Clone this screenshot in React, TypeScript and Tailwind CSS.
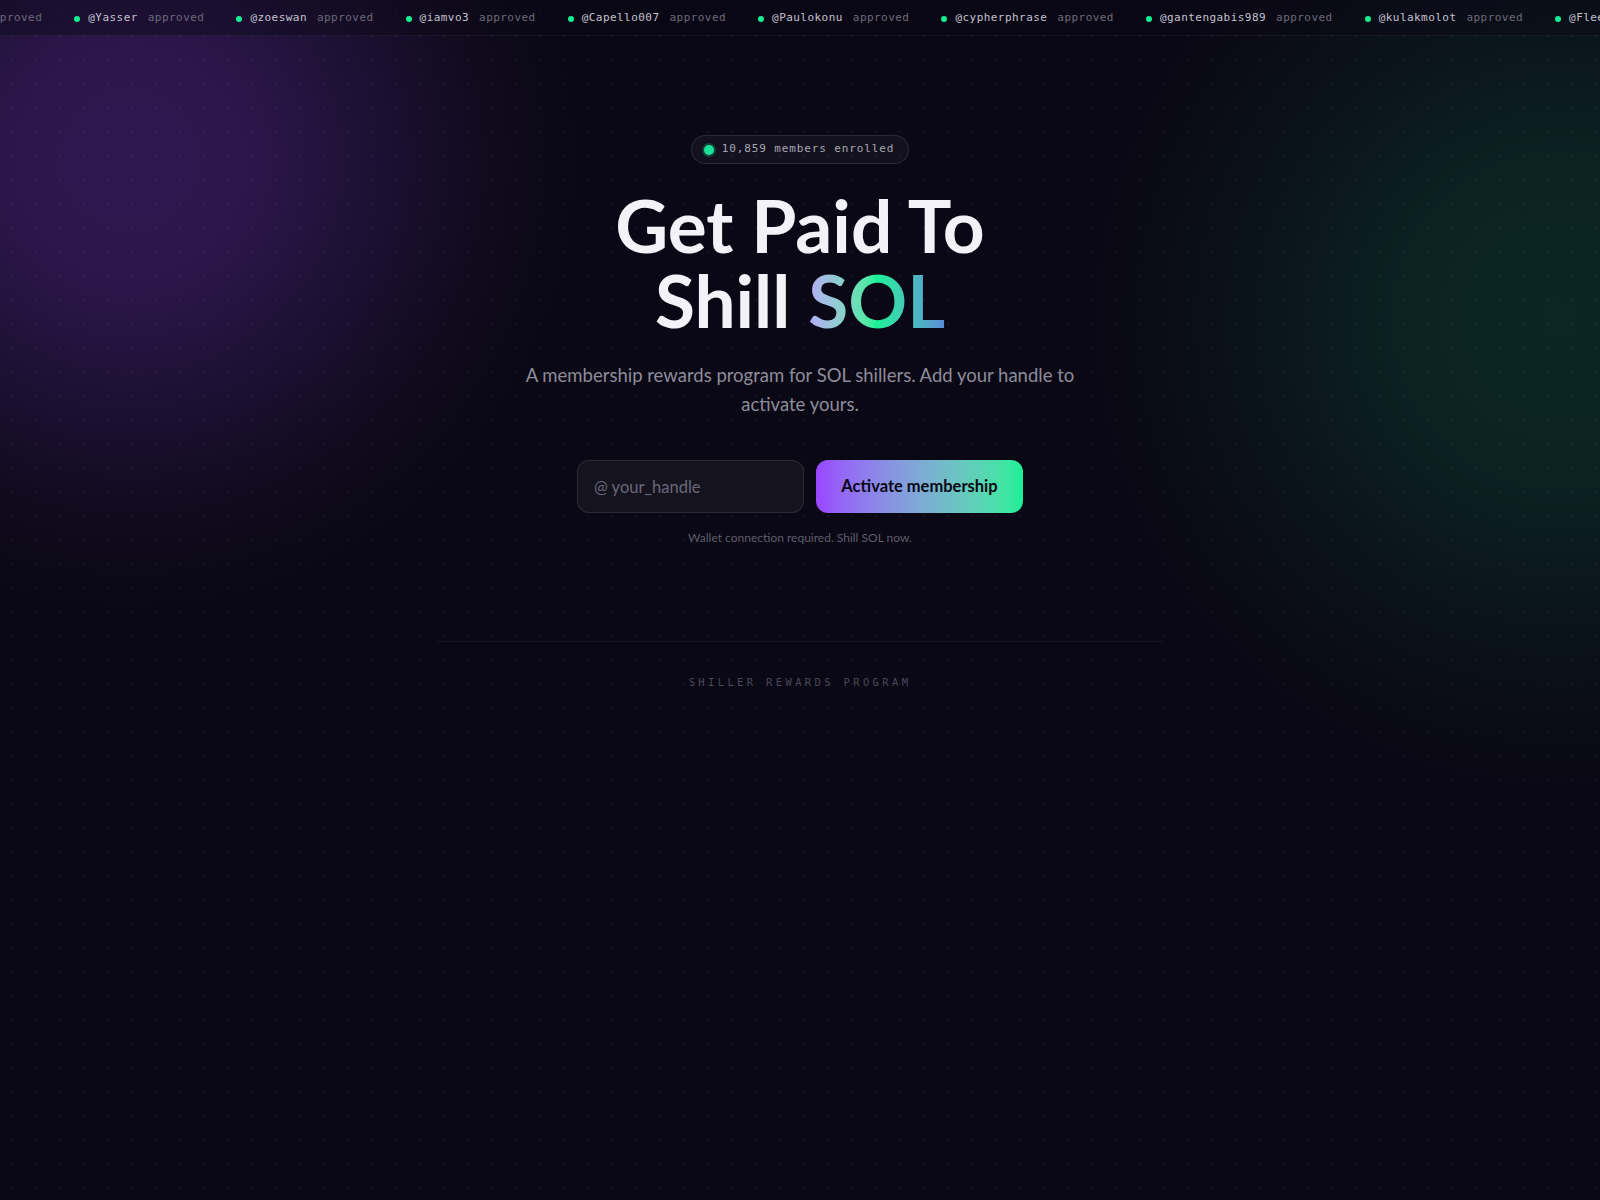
import React from 'react';

const tickerItems = [
  'Fleekman',
  'Yasser',
  'zoeswan',
  'iamvo3',
  'Capello007',
  'Paulokonu',
  'cypherphrase',
  'gantengabis989',
  'kulakmolot',
  'Fleekman',
  'Yasser',
];

const TickerItem = ({ handle }: { handle: string }) => (
  <div className="flex items-center shrink-0">
    <span className="w-1.5 h-1.5 rounded-full bg-[#14f195] mr-2" />
    <span className="text-[#c4c2cf]">@{handle}</span>
    <span className="ml-2.5 text-[#6c6a7a]">approved</span>
  </div>
);

export default function App() {
  const [handle, setHandle] = React.useState('');

  return (
    <div className="relative min-h-screen bg-[#0a0814] overflow-hidden font-['Lato','Noto_Sans',sans-serif] text-white">
      {/* background glows */}
      <div className="pointer-events-none absolute inset-0 bg-[radial-gradient(circle_at_130px_160px,rgba(153,69,255,0.26)_0px,rgba(153,69,255,0.23)_120px,rgba(153,69,255,0.12)_260px,rgba(153,69,255,0.04)_360px,transparent_450px)]" />
      <div className="pointer-events-none absolute inset-0 bg-[radial-gradient(circle_at_1560px_320px,rgba(20,241,149,0.13)_0px,rgba(20,241,149,0.115)_150px,rgba(20,241,149,0.06)_280px,rgba(20,241,149,0.02)_390px,transparent_470px)]" />
      {/* dot grid */}
      <div className="pointer-events-none absolute inset-0 bg-[radial-gradient(rgba(255,255,255,0.04)_1px,transparent_1px)] bg-[size:24px_24px]" />

      {/* Ticker */}
      <div className="relative z-10 h-9 pt-0.5 border-b border-white/5 bg-[#0a0814]/40 overflow-hidden">
        <div className="flex items-center h-full gap-8 whitespace-nowrap -translate-x-[102px] font-['DejaVu_Sans_Mono',monospace] text-[11px] tracking-[0.45px]">
          {tickerItems.map((h, i) => (
            <TickerItem key={i} handle={h} />
          ))}
        </div>
      </div>

      {/* Hero */}
      <main className="relative z-10 flex flex-col items-center pt-[99px]">
        <div className="flex items-center h-[29px] pl-[12px] pr-[14px] rounded-full border border-white/10 bg-white/[0.04]">
          <span className="w-2.5 h-2.5 rounded-full bg-[#1de39a] shadow-[0_0_0_2px_rgba(20,241,149,0.22)]" />
          <span className="ml-2 font-['DejaVu_Sans_Mono',monospace] text-[11px] tracking-[0.08em] text-[#a9a7b6]">10,859 members enrolled</span>
        </div>

        <h1 className="mt-[24px] text-center font-bold text-[73px] leading-[75px] text-[#f3f2f8]">
          Get Paid To
          <br />
          Shill{' '}
          <span className="bg-gradient-to-r from-[#b6aaf7] via-[#14f195] to-[#5b8bd8] bg-clip-text text-transparent">SOL</span>
        </h1>

        <p className="mt-[23px] max-w-[580px] text-center text-[18.5px] leading-[29px] font-normal text-[#8e8c9b]">
          A membership rewards program for SOL shillers. Add your handle to activate yours.
        </p>

        <div className="mt-[41px] flex items-center gap-3">
          <input
            value={handle}
            onChange={(e) => setHandle(e.target.value)}
            placeholder="@ your_handle"
            className="w-[227px] h-[53px] px-4 rounded-xl border border-white/10 bg-[#15131e] text-[16.5px] text-white placeholder:text-[#6a6878] outline-none"
          />
          <button className="w-[207px] h-[53px] rounded-xl bg-gradient-to-r from-[#9945ff] to-[#14f195] text-[16.5px] font-bold text-[#0a0814]">
            Activate membership
          </button>
        </div>

        <p className="mt-[16px] text-[12px] text-[#5f5d6d]">Wallet connection required. Shill SOL now.</p>

        <div className="mt-[94px] w-[728px] border-t border-white/5" />

        <p className="mt-[33px] font-['DejaVu_Sans_Mono',monospace] text-[10.5px] tracking-[0.32em] text-[#4b4959]">
          SHILLER REWARDS PROGRAM
        </p>
      </main>
    </div>
  );
}
